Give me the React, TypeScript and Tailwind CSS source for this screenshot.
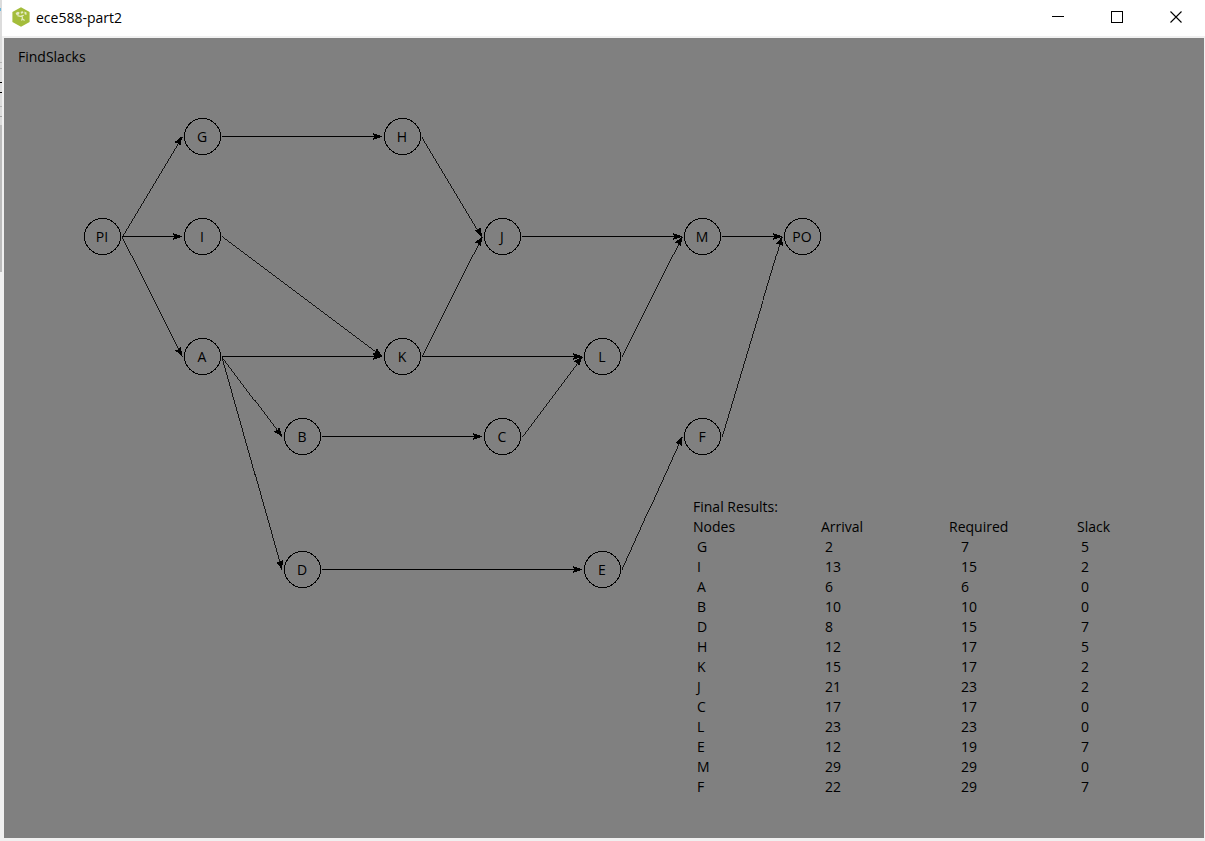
import React from "react";

type GraphNode = { id: string; x: number; y: number };

const nodes: GraphNode[] = [
  { id: "PI", x: 98, y: 198 },
  { id: "G", x: 198, y: 98 },
  { id: "I", x: 198, y: 198 },
  { id: "A", x: 198, y: 318 },
  { id: "B", x: 298, y: 398 },
  { id: "D", x: 298, y: 531 },
  { id: "H", x: 398, y: 98 },
  { id: "K", x: 398, y: 318 },
  { id: "J", x: 498, y: 198 },
  { id: "C", x: 498, y: 398 },
  { id: "L", x: 598, y: 318 },
  { id: "E", x: 598, y: 531 },
  { id: "M", x: 698, y: 198 },
  { id: "F", x: 698, y: 398 },
  { id: "PO", x: 798, y: 198 },
];

const edges: [string, string][] = [
  ["PI", "G"],
  ["PI", "I"],
  ["PI", "A"],
  ["G", "H"],
  ["I", "K"],
  ["A", "K"],
  ["A", "B"],
  ["A", "D"],
  ["H", "J"],
  ["K", "J"],
  ["K", "L"],
  ["B", "C"],
  ["C", "L"],
  ["D", "E"],
  ["E", "F"],
  ["J", "M"],
  ["L", "M"],
  ["M", "PO"],
  ["F", "PO"],
];

const results: [string, number, number, number][] = [
  ["G", 2, 7, 5],
  ["I", 13, 15, 2],
  ["A", 6, 6, 0],
  ["B", 10, 10, 0],
  ["D", 8, 15, 7],
  ["H", 12, 17, 5],
  ["K", 15, 17, 2],
  ["J", 21, 23, 2],
  ["C", 17, 17, 0],
  ["L", 23, 23, 0],
  ["E", 12, 19, 7],
  ["M", 29, 29, 0],
  ["F", 22, 29, 7],
];

const byId = (id: string) => nodes.find((n) => n.id === id)!;

function Edge({ from, to }: { from: GraphNode; to: GraphNode }) {
  const x1 = from.x + 20;
  const y1 = from.y + 0.5;
  const x2 = to.x - 20;
  const y2 = to.y + 0.5;
  const angle = (Math.atan2(y2 - y1, x2 - x1) * 180) / Math.PI;
  return (
    <g>
      <line x1={x1} y1={y1} x2={x2} y2={y2} stroke="black" strokeWidth={y1 === y2 ? 1 : 0.85} />
      <path
        d="M0.5 0 L-9 -3.5 L-8 0 L-9 3.5 Z"
        transform={`translate(${x2} ${y2}) rotate(${angle})`}
      />
    </g>
  );
}

function Diagram() {
  return (
    <svg
      className="col-start-1 row-start-1"
      width="840"
      height="600"
      role="img"
      aria-label="Timing graph"
    >
      <g shapeRendering="crispEdges">
        {edges.map(([a, b]) => (
          <Edge key={a + b} from={byId(a)} to={byId(b)} />
        ))}
        {nodes.map((n) => (
          <circle key={n.id} cx={n.x + 0.5} cy={n.y + 0.5} r="18" fill="none" stroke="black" />
        ))}
      </g>
      {nodes.map((n) => (
        <text key={n.id} x={n.x} y={n.y + 6} textAnchor="middle">
          {n.id}
        </text>
      ))}
    </svg>
  );
}

function Results() {
  return (
    <table className="col-start-1 row-start-1 mt-[459px] ml-[689px] w-[512px] table-fixed self-start text-left">
      <caption className="h-5 text-left">Final Results:</caption>
      <thead>
        <tr className="h-5">
          {["Nodes", "Arrival", "Required", "Slack"].map((h) => (
            <th key={h} scope="col" className="p-0 font-normal">
              {h}
            </th>
          ))}
        </tr>
      </thead>
      <tbody>
        {results.map(([node, arrival, required, slack]) => (
          <tr key={node} className="h-5">
            <td className="p-0 pl-1">{node}</td>
            <td className="p-0 pl-1">{arrival}</td>
            <td className="p-0 pl-3">{required}</td>
            <td className="p-0 pl-1">{slack}</td>
          </tr>
        ))}
      </tbody>
    </table>
  );
}

function AppIcon() {
  return (
    <svg width="18" height="20" viewBox="0 0 18 20" aria-hidden="true">
      <path d="M9 0.3 L17.6 5 V15 L9 19.7 L0.4 15 V5 Z" fill="#a4bd3b" />
      <path
        d="M3.6 6 L6 4.8 L7.6 5.4 L7 7.4 L4.6 8.2 Z M8.6 4.8 L11 4.2 L11.4 6 L9 6.8 Z M12.4 4.6 L14.6 5.6 L14.4 8 L12.6 7.2 Z"
        fill="#e4ebc4"
      />
      <path
        d="M5.4 8.6 L8.4 9.4 L11.8 8.2 M10 9 L10.4 11 L9.6 13.6 M10.6 12 L12.6 13.4"
        fill="none"
        stroke="#e4ebc4"
        strokeWidth="1.2"
      />
    </svg>
  );
}

function TitleBar() {
  const button = "flex h-[34px] w-[59px] items-center justify-center";
  return (
    <header className="flex h-9 items-start bg-white pl-[10px]">
      <span className="flex h-[34px] items-center">
        <AppIcon />
      </span>
      <h1 className="flex-1 pt-2 pl-[6px]">ece588-part2</h1>
      <button className={button} aria-label="Minimize">
        <svg width="12" height="12" shapeRendering="crispEdges" stroke="black">
          <path d="M0 5.5 H12" />
        </svg>
      </button>
      <button className={button} aria-label="Maximize">
        <svg width="12" height="12" shapeRendering="crispEdges" stroke="black" fill="none">
          <path d="M0.5 0.5 H11.5 V11.5 H0.5 Z" />
        </svg>
      </button>
      <button className={button} aria-label="Close">
        <svg width="12" height="12" stroke="black">
          <path d="M0.5 0.5 L11.5 11.5 M11.5 0.5 L0.5 11.5" strokeWidth="1.1" />
        </svg>
      </button>
    </header>
  );
}

/* Sliver of the window behind, with its ruler marks and scroll thumb */
function BackWindow() {
  return (
    <svg
      className="w-[2px] shrink-0 self-stretch bg-[#dcdcdc]"
      width="2"
      height="272"
      shapeRendering="crispEdges"
      aria-hidden="true"
    >
      <rect x="0" y="8" width="1" height="3" fill="#6db7dd" />
      <rect x="0" y="62" width="2" height="1" fill="#b4b4b4" />
      <rect x="0" y="68" width="2" height="1" fill="#b4b4b4" />
      <rect x="0" y="82" width="2" height="1" fill="#000000" />
      <rect x="0" y="92" width="2" height="1" fill="#000000" />
      <rect x="0" y="106" width="2" height="1" fill="#b4b4b4" />
      <rect x="0" y="116" width="2" height="1" fill="#a0a0a0" />
      <rect x="0" y="125" width="2" height="147" fill="#bcbcbc" />
    </svg>
  );
}

export default function App() {
  return (
    <div className="flex min-h-screen bg-[#f0f0f0] font-['Open_Sans','Noto_Sans',sans-serif] text-sm leading-5 text-black">
      <BackWindow />
      <div className="flex min-w-0 flex-1 flex-col">
        <TitleBar />
        <main className="mt-[2px] mr-px mb-[3px] ml-[2px] grid flex-1 grid-cols-1 overflow-hidden bg-[#808080]">
          <h2 className="col-start-1 row-start-1 self-start pt-[9px] pl-[14px]">FindSlacks</h2>
          <Diagram />
          <Results />
        </main>
      </div>
    </div>
  );
}
